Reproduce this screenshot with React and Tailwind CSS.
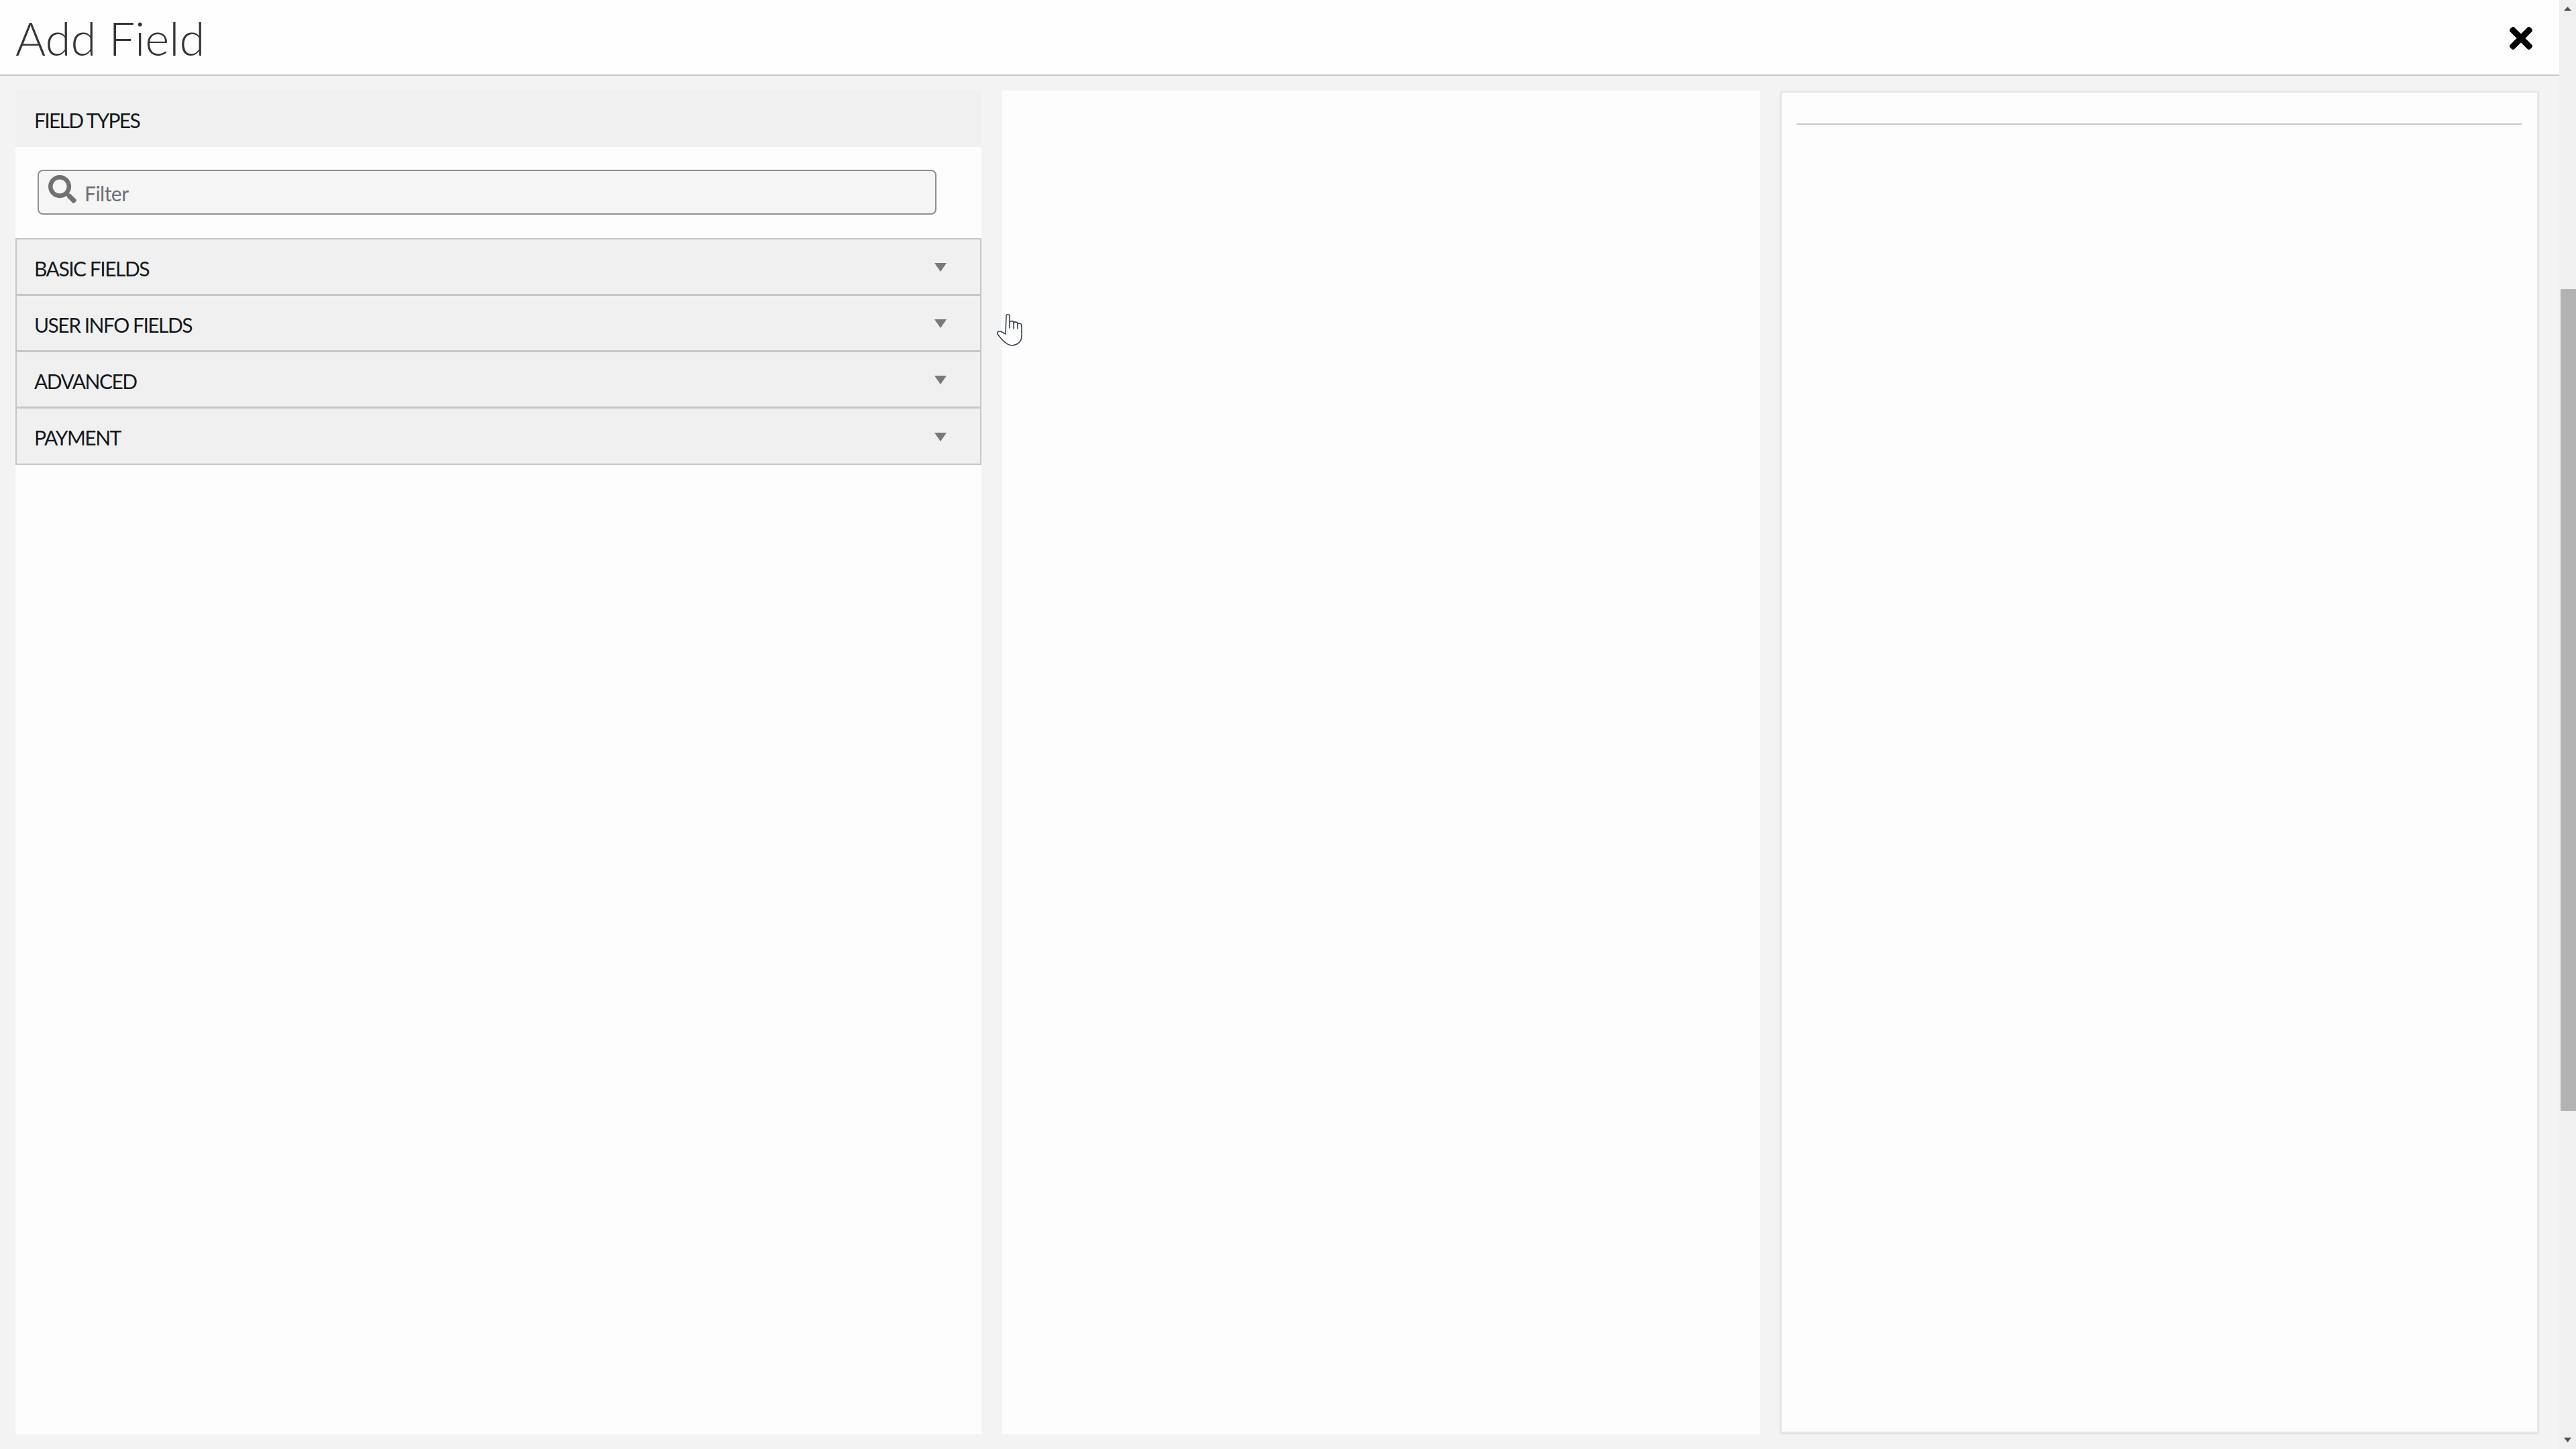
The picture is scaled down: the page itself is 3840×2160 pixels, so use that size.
import { FaSearch, FaTimes } from "react-icons/fa";

const sections = ["BASIC FIELDS", "USER INFO FIELDS", "ADVANCED", "PAYMENT"];

function SectionRow({ label, last }) {
  return (
    <div
      className={`flex items-center justify-between h-[84px] pl-[26px] pr-[50px] pt-[2px] bg-[#f0f0f0] border-[#c6c6c6] border-l-2 border-r-2 ${
        last ? "border-b-2" : "border-b-[3px]"
      }`}
    >
      <span className="pt-[2px] text-[30px] leading-none text-[#14181c] tracking-[-1.5px]">{label}</span>
      <svg width="18" height="13" viewBox="0 0 18 13">
        <polygon points="0,0 18,0 9,13" fill="#77797c" />
      </svg>
    </div>
  );
}

function HandCursor() {
  return (
    <svg
      viewBox="0 0 38 49"
      className="absolute left-[1486px] top-[467px] w-[38px] h-[49px]"
      fill="none"
      stroke="#3a4450"
      strokeWidth="1.6"
      strokeLinejoin="round"
      strokeLinecap="round"
    >
      <path
        fill="#fdfdfd"
        d="M13 31 L14 4 C14 1 19 1 19 4 L19 13 C21 11 25 11 25 14 C27 12 31 13 31 16 C33 14 37 15 37 19 L37 34 C37 42 31 47 23 48 C16 48 10 42 5 36 L1 31 C0 28 3 26 6 27 L13 31 Z"
      />
      <path d="M19 13 L19 22 M25 14 L25 23 M31 16 L31 23" />
    </svg>
  );
}

export default function App() {
  return (
    <div className="relative flex w-full h-[2160px] overflow-hidden bg-[#f3f3f3] font-['Lato','Noto_Sans',sans-serif]">
      <div className="flex flex-col flex-1 min-w-0">
        <header className="flex items-center justify-between h-[113px] pl-[23px] pr-[40px] pt-[2px] bg-[#fefefe] border-b-2 border-[#cacaca]">
          <h1 className="text-[69px] leading-none font-light text-[#363636]">Add Field</h1>
          <FaTimes className="w-[34px] h-[50px] text-black" />
        </header>

        <div className="flex flex-1 min-h-0 pl-[23px] pr-[31px] pt-[22px] pb-[22px] gap-[30px]">
          <section className="flex flex-col w-[1440px] bg-[#fdfdfd]">
            <div className="flex items-center h-[84px] pl-[28px] pt-[4px] bg-[#f0f0f0]">
              <span className="text-[30px] leading-none text-[#14181c] tracking-[-1.7px]">FIELD TYPES</span>
            </div>
            <div className="h-[136px] pt-[34px] pl-[33px]">
              <div className="flex items-center w-[1340px] h-[67px] pl-[14px] gap-[12px] rounded-[8px] border-2 border-[#8f8f8f] bg-[#f5f5f5]">
                <FaSearch className="w-[42px] h-[42px] mb-[10px] text-[#717171] shrink-0" />
                <input
                  placeholder="Filter"
                  className="flex-1 pt-[4px] bg-transparent text-[30px] tracking-[-0.5px] outline-none placeholder:text-[#6a6f76]"
                />
              </div>
            </div>
            <div className="border-t-2 border-[#c6c6c6]">
              {sections.map((s, i) => (
                <SectionRow key={s} label={s} last={i === sections.length - 1} />
              ))}
            </div>
          </section>

          <section className="w-[1131px] bg-[#fdfdfd]" />

          <section className="flex-1 mb-[2px] mt-[1px] bg-[#fdfdfd] border-2 border-[#e6e6e6] pl-[22px] pr-[23px] pt-[46px] shadow-sm">
            <div className="border-t-2 border-[#c8c8c8]" />
          </section>
        </div>
      </div>

      <aside className="flex flex-col items-center w-[25px] bg-[#f0f0f0]">
        <svg width="11" height="6" viewBox="0 0 11 6" className="mt-[10px] shrink-0">
          <polygon points="0,6 11,6 5.5,0" fill="#505050" />
        </svg>
        <div className="w-[23px] h-[1225px] mt-[415px] ml-[2px] bg-[#b3b3b3]" />
        <svg width="11" height="7" viewBox="0 0 11 7" className="mt-auto mb-[10px] shrink-0">
          <polygon points="0,0 11,0 5.5,7" fill="#505050" />
        </svg>
      </aside>

      <HandCursor />
    </div>
  );
}
